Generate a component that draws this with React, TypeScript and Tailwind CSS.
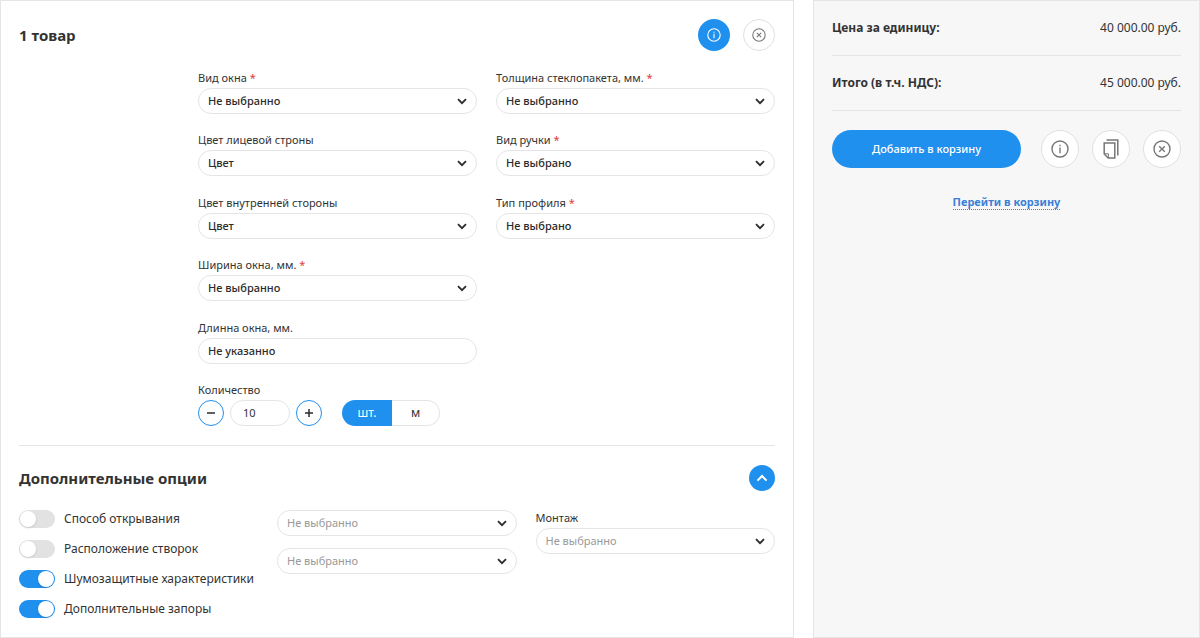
import React, { useState } from "react";

const ChevronIcon = ({ className = "" }: { className?: string }) => (
  <svg
    viewBox="0 0 10 7"
    fill="none"
    stroke="currentColor"
    strokeWidth="1.8"
    className={className}
    aria-hidden="true"
  >
    <path d="M1 1.2 5 5.2 9 1.2" />
  </svg>
);

const InfoIcon = ({ className = "" }: { className?: string }) => (
  <svg
    viewBox="0 0 18 18"
    fill="none"
    stroke="currentColor"
    strokeWidth="1.4"
    className={className}
    aria-hidden="true"
  >
    <circle cx="9" cy="9" r="8" />
    <path d="M9 7.4v5.8M9 4.8v1.4" />
  </svg>
);

const CloseIcon = ({ className = "" }: { className?: string }) => (
  <svg
    viewBox="0 0 18 18"
    fill="none"
    stroke="currentColor"
    strokeWidth="1.4"
    className={className}
    aria-hidden="true"
  >
    <circle cx="9" cy="9" r="8" />
    <path d="m6.2 6.2 5.6 5.6M11.8 6.2l-5.6 5.6" />
  </svg>
);

const CopyIcon = ({ className = "" }: { className?: string }) => (
  <svg
    viewBox="0 0 16 20"
    fill="none"
    stroke="currentColor"
    strokeWidth="1.5"
    className={className}
    aria-hidden="true"
  >
    <path d="M3.5 1h11.3v15.5" />
    <path d="M1.2 4h10.6v15H5.2l-4-4z" />
    <path strokeWidth="1" d="M1.2 14.8h4.2V19" />
  </svg>
);

type SelectProps = {
  id: string;
  value: string;
  label?: string;
  required?: boolean;
  muted?: boolean;
};

const Label = ({
  htmlFor,
  required,
  children,
}: {
  htmlFor: string;
  required?: boolean;
  children: React.ReactNode;
}) => (
  <label htmlFor={htmlFor} className="block pb-0.5 text-[11px] leading-4">
    {children}
    {required && <span className="text-[#e03a3a]"> *</span>}
  </label>
);

const Select = ({ id, value, label, required, muted }: SelectProps) => (
  <div>
    {label && (
      <Label htmlFor={id} required={required}>
        {label}
      </Label>
    )}
    <div className="relative">
      <select
        id={id}
        aria-label={label ? undefined : value}
        className={`block h-[26px] w-full appearance-none rounded-full border border-[#e5e5e5] bg-white pl-[9px] pr-8 text-[11px] ${
          muted ? "text-[#999999]" : "font-medium text-[#2b2b2b]"
        }`}
      >
        <option>{value}</option>
      </select>
      <ChevronIcon className="pointer-events-none absolute right-[10px] top-[10px] h-[7px] w-[10px] text-[#2b2b2b]" />
    </div>
  </div>
);

const Toggle = ({ label, checked }: { label: string; checked: boolean }) => (
  <label className="flex items-center gap-[9px] whitespace-nowrap text-[12px] leading-[18px]">
    <input
      type="checkbox"
      role="switch"
      defaultChecked={checked}
      className="h-[18px] w-9 shrink-0 appearance-none rounded-full bg-[#e2e2e2] p-px before:block before:size-4 before:rounded-full before:bg-white before:shadow-sm before:content-[''] checked:bg-[#2090ef] checked:before:ml-[18px]"
    />
    {label}
  </label>
);

const Quantity = () => {
  const [count, setCount] = useState(10);
  const round =
    "flex size-[26px] items-center justify-center rounded-full border border-[#2090ef] bg-white text-[#2b2b2b]";

  return (
    <div>
      <Label htmlFor="count">Количество</Label>
      <div className="flex items-center">
        <button
          type="button"
          aria-label="Уменьшить"
          className={round}
          onClick={() => setCount(Math.max(0, count - 1))}
        >
          <svg viewBox="0 0 8 8" className="size-2" stroke="currentColor" strokeWidth="1.5">
            <path d="M0 4h8" />
          </svg>
        </button>
        <input
          id="count"
          value={count}
          onChange={(e) => setCount(Number(e.target.value) || 0)}
          className="mx-1.5 h-[26px] w-[60px] rounded-full border border-[#e5e5e5] bg-white pl-3 text-[11px]"
        />
        <button
          type="button"
          aria-label="Увеличить"
          className={round}
          onClick={() => setCount(count + 1)}
        >
          <svg viewBox="0 0 8 8" className="size-2" stroke="currentColor" strokeWidth="1.5">
            <path d="M0 4h8M4 0v8" />
          </svg>
        </button>
        <div className="ml-5 flex h-[26px] text-[12px]">
          <button type="button" className="w-[50px] rounded-l-full bg-[#2090ef] text-white">
            шт.
          </button>
          <button
            type="button"
            className="w-12 rounded-r-full border border-l-0 border-[#e5e5e5] bg-white"
          >
            м
          </button>
        </div>
      </div>
    </div>
  );
};

const Product = () => {
  return (
    <main className="flex flex-1 flex-col border border-[#e5e5e5] bg-white px-[18px] pb-[19px] pt-[18px]">
      <div className="flex items-center justify-between">
        <h1 className="text-[15px] font-bold leading-5">1 товар</h1>
        <div className="flex gap-[13px]">
          <button
            type="button"
            aria-label="Информация"
            className="flex size-8 items-center justify-center rounded-full bg-[#2090ef] text-white"
          >
            <InfoIcon className="size-[14px]" />
          </button>
          <button
            type="button"
            aria-label="Удалить"
            className="flex size-8 items-center justify-center rounded-full border border-[#e0e0e0] bg-white text-[#777777]"
          >
            <CloseIcon className="size-[14px]" />
          </button>
        </div>
      </div>

      {/* Parameters */}
      <div className="ml-[179px] mt-[19px] grid flex-1 grid-cols-2 content-between gap-x-[19px]">
        <Select id="kind" label="Вид окна" value="Не выбранно" required />
        <Select id="glass" label="Толщина стеклопакета, мм." value="Не выбранно" required />
        <Select id="front" label="Цвет лицевой строны" value="Цвет" />
        <Select id="handle" label="Вид ручки" value="Не выбрано" required />
        <Select id="inner" label="Цвет внутренней стороны" value="Цвет" />
        <Select id="profile" label="Тип профиля" value="Не выбрано" required />
        <div className="col-span-2 grid grid-cols-2 gap-x-[19px]">
          <Select id="width" label="Ширина окна, мм." value="Не выбранно" required />
        </div>
        <div className="col-span-2 grid grid-cols-2 gap-x-[19px]">
          <div>
            <Label htmlFor="length">Длинна окна, мм.</Label>
            <input
              id="length"
              defaultValue="Не указанно"
              className="block h-[26px] w-full rounded-full border border-[#e5e5e5] bg-white px-[9px] text-[11px] font-medium text-[#2b2b2b]"
            />
          </div>
        </div>
        <Quantity />
      </div>

      {/* Extra options */}
      <section className="mt-[19px] border-t border-[#e5e5e5] pt-[19px]">
        <div className="flex items-center justify-between">
          <h2 className="text-[15px] font-bold leading-5">Дополнительные опции</h2>
          <button
            type="button"
            aria-label="Свернуть"
            className="flex size-[26px] items-center justify-center rounded-full bg-[#2090ef] text-white"
          >
            <ChevronIcon className="h-2 w-3 rotate-180" />
          </button>
        </div>
        <div className="mt-[19px] flex gap-[19px]">
          <div className="flex w-[239px] flex-col gap-3">
            <Toggle label="Способ открывания" checked={false} />
            <Toggle label="Расположение створок" checked={false} />
            <Toggle label="Шумозащитные характеристики" checked />
            <Toggle label="Дополнительные запоры" checked />
          </div>
          <div className="flex flex-1 flex-col gap-3">
            <Select id="option-1" value="Не выбранно" muted />
            <Select id="option-2" value="Не выбранно" muted />
          </div>
          <div className="flex-1">
            <Select id="mount" label="Монтаж" value="Не выбранно" muted />
          </div>
        </div>
      </section>
    </main>
  );
};

const Summary = () => {
  const prices = [
    { name: "Цена за единицу:", value: "40 000.00 руб." },
    { name: "Итого (в т.ч. НДС):", value: "45 000.00 руб." },
  ];
  const round =
    "flex size-[38px] items-center justify-center rounded-full border border-[#e0e0e0] bg-white text-[#777777]";

  return (
    <aside className="w-[387px] border border-[#e5e5e5] bg-[#f7f7f7] px-[18px]">
      <dl>
        {prices.map((price) => (
          <div
            key={price.name}
            className="flex h-[55px] items-center justify-between border-b border-[#e5e5e5] text-[12px]"
          >
            <dt className="font-bold">{price.name}</dt>
            <dd>{price.value}</dd>
          </div>
        ))}
      </dl>
      <div className="mt-[19px] flex items-center justify-between">
        <button
          type="button"
          className="h-[38px] w-[189px] rounded-full bg-[#2090ef] text-[11px] font-medium text-white"
        >
          Добавить в корзину
        </button>
        <div className="flex gap-[13px]">
          <button type="button" aria-label="Информация" className={round}>
            <InfoIcon className="size-[18px]" />
          </button>
          <button type="button" aria-label="Копировать" className={round}>
            <CopyIcon className="h-5 w-4" />
          </button>
          <button type="button" aria-label="Удалить" className={round}>
            <CloseIcon className="size-[18px]" />
          </button>
        </div>
      </div>
      <div className="mt-5 text-center">
        <a
          href="#"
          className="inline-block border-b border-dotted border-[#3a7fd5] text-[11px] font-bold leading-[14px] text-[#3a7fd5]"
        >
          Перейти в корзину
        </a>
      </div>
    </aside>
  );
};

const App = () => {
  return (
    <div className="flex min-h-screen gap-[19px] bg-white font-['Noto_Sans','Open_Sans',sans-serif] text-[#333333]">
      <Product />
      <Summary />
    </div>
  );
};

export default App;
